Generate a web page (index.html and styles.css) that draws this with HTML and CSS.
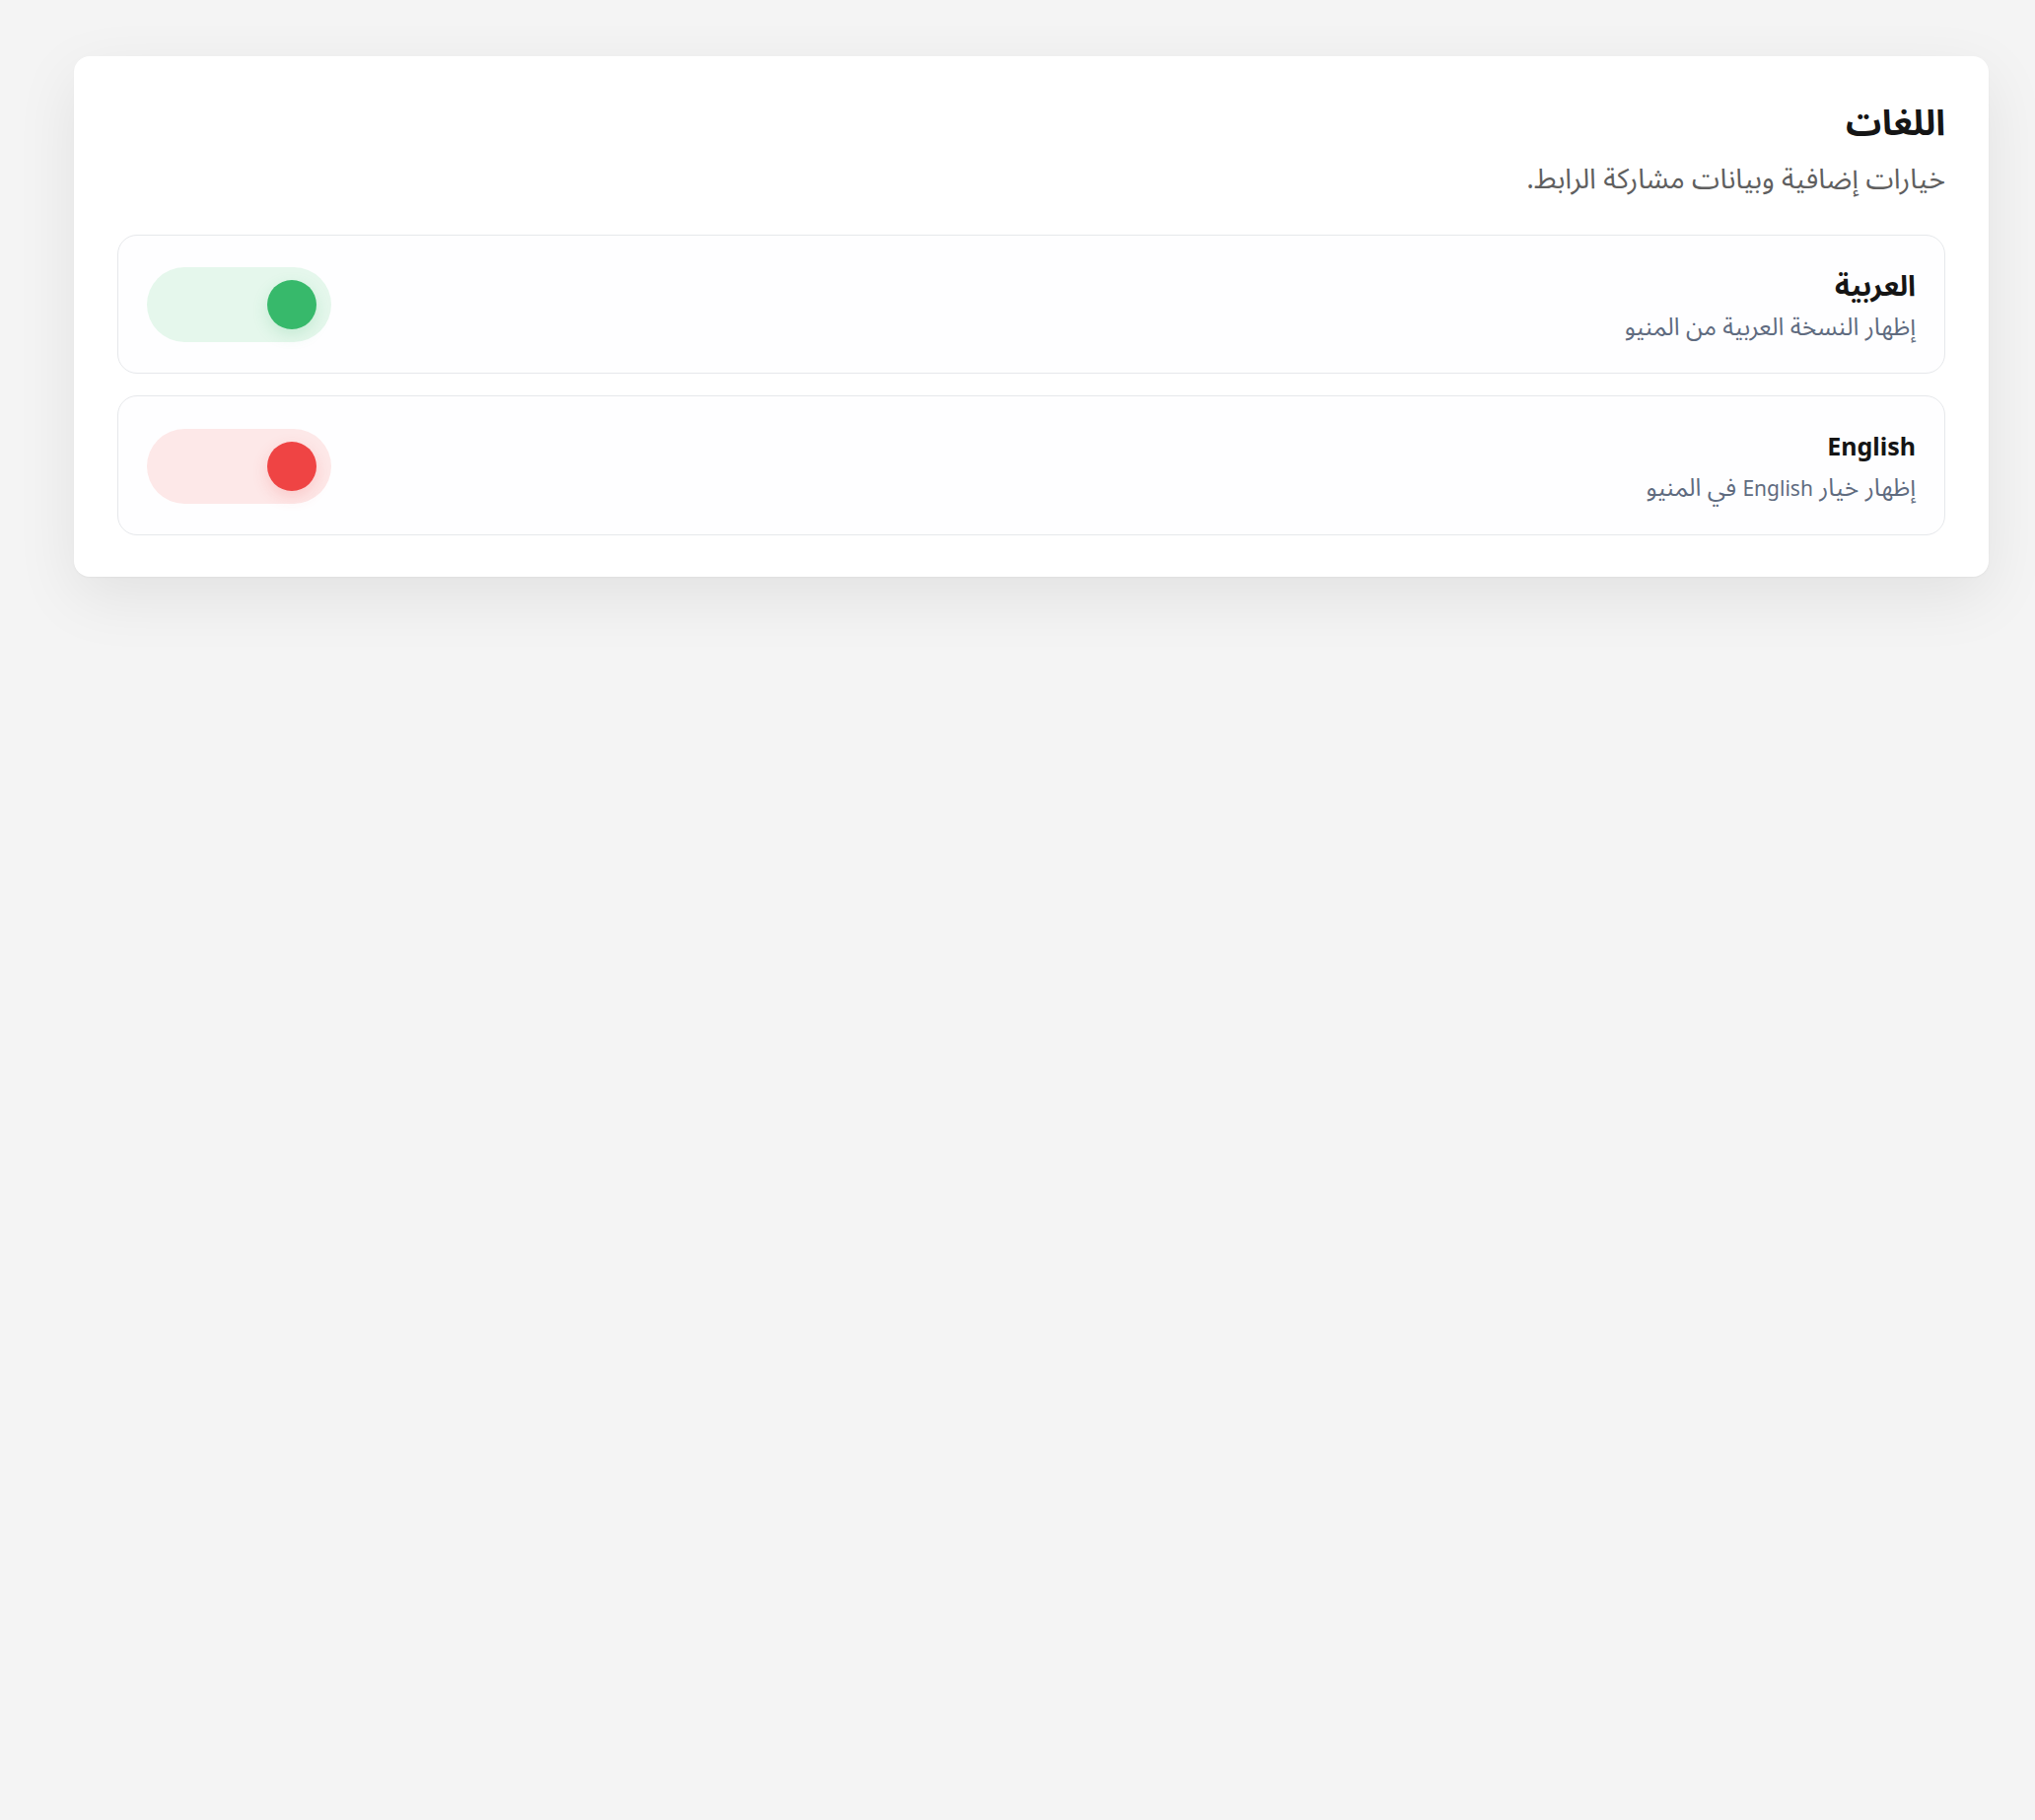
FILE: index.html
```html
<!DOCTYPE html>
<html lang="ar" dir="rtl">
<head>
    <meta charset="UTF-8">
    <meta name="viewport" content="width=device-width, initial-scale=1.0">
    <title>اللغات</title>
    <link rel="stylesheet" href="styles.css">
</head>
<body>
    <div class="card">
        <h2 class="card-title">اللغات</h2>
        <p class="card-sub">خيارات إضافية وبيانات مشاركة الرابط.</p>

        <div class="lang-list">
            <div class="lang-row">
                <div class="lang-text">
                    <div class="lang-name">العربية</div>
                    <div class="lang-desc">إظهار النسخة العربية من المنيو</div>
                </div>
                <button class="toggle on" aria-label="العربية"><span class="knob"></span></button>
            </div>

            <div class="lang-row">
                <div class="lang-text">
                    <div class="lang-name"><span class="latin">English</span></div>
                    <div class="lang-desc">إظهار خيار <span class="latin">English</span> في المنيو</div>
                </div>
                <button class="toggle off" aria-label="English"><span class="knob"></span></button>
            </div>
        </div>
    </div>
</body>
</html>
```

FILE: styles.css
```css
html {
    background-color: #f4f4f4;
}
body {
    font-family: 'Noto Sans', 'Noto Sans Arabic', 'DejaVu Sans', sans-serif;
    margin: 0;
    padding: 57px 47px 200px 75px;
    color: #111;
}
.card {
    background: white;
    border-radius: 16px;
    padding: 43px 44px 42px;
    box-shadow: 0 20px 64px rgba(0, 0, 0, 0.08), 0 1px 2px rgba(0, 0, 0, 0.04);
}
.card-title {
    margin: 0;
    font-size: 36px;
    line-height: 48px;
    font-weight: 700;
    color: #151515;
}
.card-sub {
    margin: 12px 0 0;
    font-size: 28.5px;
    line-height: 40px;
    color: #5f5f5f;
}
.lang-list {
    margin-top: 38px;
    display: flex;
    flex-direction: column;
    gap: 22px;
}
.lang-row {
    display: flex;
    justify-content: space-between;
    align-items: center;
    padding: 32px 29px 31px 29px;
    border: 1px solid #e6e8eb;
    border-radius: 20px;
    background: #fefeff;
}
.lang-name {
    font-size: 29px;
    line-height: 34px;
    font-weight: 700;
    color: #151515;
}
.lang-name .latin {
    font-size: 25px;
}
.lang-desc {
    margin-top: 9px;
    font-size: 24.7px;
    line-height: 32px;
    color: #5f6b7f;
}
.lang-desc .latin {
    font-size: 21px;
}
.toggle {
    width: 187px;
    height: 76px;
    border: none;
    border-radius: 38px;
    padding: 0 15px;
    display: flex;
    align-items: center;
    justify-content: flex-start;
    cursor: pointer;
}
.knob {
    width: 50px;
    height: 50px;
    border-radius: 50%;
}
.toggle.on {
    background-color: #e5f7ec;
}
.toggle.on .knob {
    background-color: #37b96b;
    box-shadow: 0 6px 16px rgba(55, 185, 107, 0.18);
}
.toggle.off {
    background-color: #fde8e8;
}
.toggle.off .knob {
    background-color: #ef4444;
    box-shadow: 0 6px 16px rgba(239, 68, 68, 0.18);
}
```
